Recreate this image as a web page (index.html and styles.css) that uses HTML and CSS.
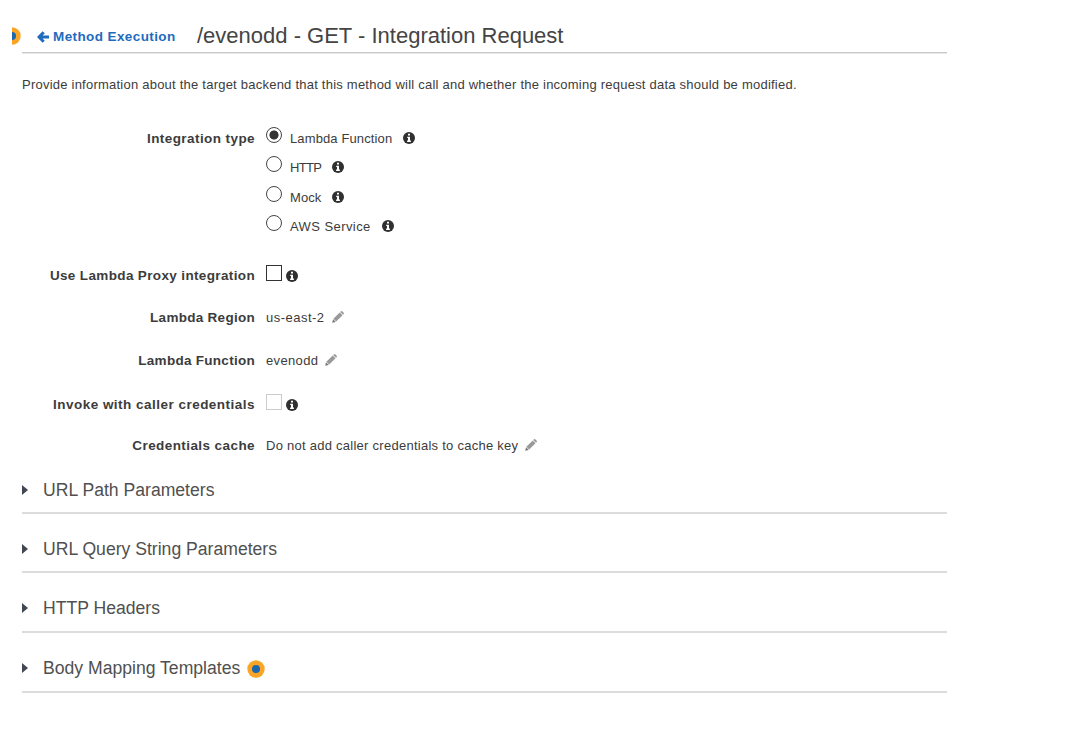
FILE: index.html
```html
<!DOCTYPE html>
<html lang="en">
<head>
<meta charset="utf-8">
<title>Integration Request</title>
<link rel="stylesheet" href="styles.css">
</head>
<body>
<svg class="defs" width="0" height="0">
  <symbol id="info" viewBox="0 0 12 12"><circle cx="6" cy="6" r="6" fill="#303030"/><path d="M5 1.8h2v1.7H5zM4.2 4.7H7v3.9h.9V10H4.1V8.6H5V6h-.8z" fill="#fff"/></symbol>
  <symbol id="pencil" viewBox="0 0 12 12"><path d="M.2 11.8l.9-3.6 2.7 2.7z" fill="#777"/><path d="M1.400 7.800L7.700 1.500l2.800 2.800-6.300 6.300z" fill="#999"/><path d="M8.200 1L9 .3q.6-.5 1.200 0l1.500 1.500q.5.6 0 1.200l-.7.8z" fill="#999"/></symbol>
  <symbol id="marker" viewBox="0 0 18 18"><circle cx="9" cy="9" r="8.700" fill="#fba527"/><circle cx="9" cy="9" r="4" fill="#1c67ad"/></symbol>
</svg>
<main class="page">
  <header class="header">
    <span class="marker-clip"><svg class="marker"><use href="#marker"/></svg></span>
    <a class="back"><svg class="arrow" viewBox="0 0 12 12"><path d="M6.700 1.200L2 6l4.700 4.800M2.500 6H12" fill="none" stroke="#1f6bbd" stroke-width="3"/></svg><span>Method Execution</span></a>
    <h1 class="title">/evenodd - GET - Integration Request</h1>
  </header>
  <p class="intro">Provide information about the target backend that this method will call and whether the incoming request data should be modified.</p>
  <section class="form">
    <div class="label">Integration type</div>
    <div class="field"><i class="radio on"></i><span class="t-lambda">Lambda Function</span><svg class="info"><use href="#info"/></svg></div>
    <div class="field"><i class="radio"></i><span class="t-http">HTTP</span><svg class="info"><use href="#info"/></svg></div>
    <div class="field"><i class="radio"></i><span class="t-mock">Mock</span><svg class="info"><use href="#info"/></svg></div>
    <div class="field"><i class="radio"></i><span class="t-aws">AWS Service</span><svg class="info"><use href="#info"/></svg></div>
    <div class="label t-proxy">Use Lambda Proxy integration</div>
    <div class="field"><i class="check"></i><svg class="info"><use href="#info"/></svg></div>
    <div class="label t-short">Lambda Region</div>
    <div class="field"><span class="t-region">us-east-2</span><svg class="pencil"><use href="#pencil"/></svg></div>
    <div class="label t-short">Lambda Function</div>
    <div class="field"><span class="t-name">evenodd</span><svg class="pencil"><use href="#pencil"/></svg></div>
    <div class="label t-invoke">Invoke with caller credentials</div>
    <div class="field"><i class="check disabled"></i><svg class="info"><use href="#info"/></svg></div>
    <div class="label">Credentials cache</div>
    <div class="field"><span class="t-cache">Do not add caller credentials to cache key</span><svg class="pencil"><use href="#pencil"/></svg></div>
  </section>
  <section class="panels">
    <div class="panel"><i class="caret"></i><h2>URL Path Parameters</h2></div>
    <div class="panel"><i class="caret"></i><h2>URL Query String Parameters</h2></div>
    <div class="panel"><i class="caret"></i><h2>HTTP Headers</h2></div>
    <div class="panel"><i class="caret"></i><h2>Body Mapping Templates</h2><svg class="marker"><use href="#marker"/></svg></div>
  </section>
</main>
</body>
</html>
```
FILE: styles.css
```css
* { box-sizing: border-box; }
body { margin: 0; background: #fff; color: #3c3c3c; font: 13px/18px "Liberation Sans", Arial, sans-serif; }
svg { display: block; flex: none; }
.defs { position: absolute; }
.page { width: 947px; padding: 18px 0 0 12px; }
.header { display: flex; align-items: center; height: 35px; position: relative; }
.header::after { content: ""; position: absolute; left: 10px; right: 0; bottom: -1px; height: 2px; background: linear-gradient(#c8c8c8 50%, #e8e8e8 50%); }
.marker { width: 18px; height: 18px; }
.marker-clip { width: 9px; overflow: hidden; }
.marker-clip .marker { margin-left: -9px; }
.back { display: flex; align-items: center; margin: 3px 0 0 16px; width: 160px; color: #1f6bbd; font-size: 13.500px; font-weight: bold; letter-spacing: .4px; white-space: nowrap; }
.arrow { width: 12px; height: 12px; margin-right: 4px; }
.title { margin: 0; font-size: 22px; line-height: 34px; font-weight: normal; white-space: nowrap; color: #444; }
.intro { margin: 23px 0 0 10px; white-space: nowrap; letter-spacing: .23px; }
.form { display: grid; grid-template-columns: 243px 1fr; column-gap: 11px; grid-template-rows: 29px 30px 29px 49px 42px 43px 44px 41px 29px; margin-top: 30px; align-items: start; }
.label { grid-column: 1; text-align: right; font-size: 13.500px; font-weight: bold; letter-spacing: .42px; white-space: nowrap; line-height: 29px; }
.t-proxy { letter-spacing: .36px; }
.t-short { letter-spacing: .28px; }
.t-invoke { letter-spacing: .48px; }
.field { grid-column: 2; display: flex; align-items: center; height: 29px; letter-spacing: .26px; white-space: nowrap; }
.t-lambda { letter-spacing: .12px; }
.t-http { letter-spacing: -.65px; }
.t-mock { letter-spacing: .1px; }
.t-aws { letter-spacing: .42px; }
.t-region { letter-spacing: .48px; }
.t-name { letter-spacing: .35px; }
.radio { width: 16px; height: 16px; margin: -7px 8px 0 0; border: 1px solid #444; border-radius: 50%; flex: none; }
.radio.on { background: radial-gradient(circle, #333 4.200px, #fff 4.900px); }
.info { width: 12px; height: 12px; margin: -1px 0 0 11px; }
.check { width: 16px; height: 16px; margin-top: -6px; border: 1px solid #333; }
.check.disabled { border-color: #ccc; }
.check + .info { margin: 1px 0 0 4px; }
.pencil { width: 12px; height: 12px; margin: -1px 0 0 7px; }
.panels { margin: -5px 0 0 10px; }
.panel { display: flex; align-items: center; height: 59px; padding-top: 12px; border-bottom: 2px solid #dcdcdc; }
.panel:nth-child(n+3) { height: 60px; }
.caret { border-left: 6px solid #434752; border-top: 5px solid transparent; border-bottom: 5px solid transparent; margin-right: 15px; }
h2 { margin: 0; font-size: 17.600px; line-height: 24px; font-weight: normal; color: #505050; white-space: nowrap; }
.panel .marker { margin: 1px 0 0 7px; }
```
